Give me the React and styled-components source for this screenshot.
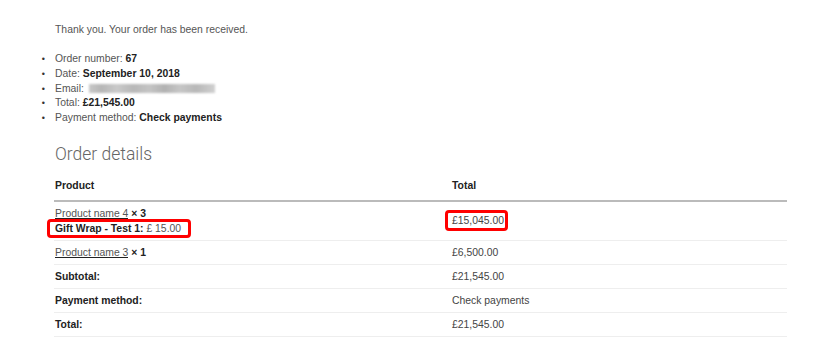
import React from "react";
import styled, { createGlobalStyle } from "styled-components";

const Global = createGlobalStyle`
  html, body { margin: 0; padding: 0; background: #fff; }
  body { font-family: "Liberation Sans", Arial, sans-serif; font-size: 10.4px; color: #555; }
`;

const Page = styled.div`
  padding: 22px 0 0 55px;
`;

const Notice = styled.p`
  margin: 0 0 15px;
  line-height: 15px;
  color: #555;
`;

const Details = styled.ul`
  margin: 0;
  padding: 0;
  list-style: disc outside;
  li {
    line-height: 14.75px;
    color: #555;
  }
  li::marker {
    content: "\\2022\\00a0\\00a0\\00a0\\00a0";
    color: #333;
    font-size: 9px;
  }
`;

const Strong = styled.strong`
  color: #222;
  font-weight: 700;
`;

const Blurred = styled.span`
  display: inline-block;
  vertical-align: -1px;
  width: 126px;
  height: 9px;
  margin-left: 2px;
  background: linear-gradient(90deg, #c8c8c8 0%, #b6b6b6 10%, #cacaca 22%, #b8b8b8 35%, #c4c4c4 48%, #b2b2b2 60%, #c6c6c6 72%, #b8b8b8 85%, #d0d0d0 100%);
  filter: blur(1.2px);
`;

const Heading = styled.h2`
  margin: 18px 0 8px;
  font-family: Roboto, "Liberation Sans", sans-serif;
  font-weight: 300;
  font-size: 17.5px;
  line-height: 20px;
  color: #666;
`;

const Table = styled.table`
  margin-left: -1px;
  width: 733px;
  border-collapse: collapse;
  table-layout: fixed;
`;

const Th = styled.th`
  text-align: left;
  font-weight: 700;
  color: #222;
  padding: ${(p) => (p.$head ? "7px 0 7px 1px" : "4px 0 4px 1px")};
  line-height: ${(p) => (p.$head ? "14px" : "15px")};
  vertical-align: middle;
`;

const Td = styled.td`
  padding: 4px 0 4px 1px;
  line-height: 15px;
  color: #444;
  vertical-align: middle;
`;

const HeadRow = styled.tr`
  border-bottom: 2px solid #bbb;
`;

const Row = styled.tr`
  border-bottom: 1px solid #eee;
`;

const Link = styled.a`
  color: #555;
  text-decoration: none;
  box-shadow: inset 0 -1px 0 #222;
`;

const Meta = styled.div`
  color: #555;
`;

const Mark = styled.span`
  outline: 3px solid #f00;
  border-radius: 1px;
  padding: ${(p) => p.$pad};
  margin: ${(p) => p.$margin};
`;

const Qty = styled.strong`
  color: #222;
`;

export default function App() {
  return (
    <>
      <Global />
      <Page>
        <Notice>Thank you. Your order has been received.</Notice>
        <Details>
          <li>Order number: <Strong>67</Strong></li>
          <li>Date: <Strong>September 10, 2018</Strong></li>
          <li>Email: <Blurred /></li>
          <li>Total: <Strong>£21,545.00</Strong></li>
          <li>Payment method: <Strong>Check payments</Strong></li>
        </Details>
        <Heading>Order details</Heading>
        <Table>
          <colgroup>
            <col style={{ width: "397px" }} />
            <col />
          </colgroup>
          <thead>
            <HeadRow>
              <Th $head>Product</Th>
              <Th $head>Total</Th>
            </HeadRow>
          </thead>
          <tbody>
            <Row>
              <Td>
                <Link href="#">Product name 4</Link> <Qty>× 3</Qty>
                <Meta>
                  <Mark $pad="1px 7px 1px 5px" $margin="0 -7px 0 -5px">
                    <Strong>Gift Wrap - Test 1:</Strong> £ 15.00
                  </Mark>
                </Meta>
              </Td>
              <Td>
                <Mark $pad="2px 1px 2px 4px" $margin="0 -1px 0 -4px">£15,045.00</Mark>
              </Td>
            </Row>
            <Row>
              <Td>
                <Link href="#">Product name 3</Link> <Qty>× 1</Qty>
              </Td>
              <Td>£6,500.00</Td>
            </Row>
            <Row>
              <Th>Subtotal:</Th>
              <Td>£21,545.00</Td>
            </Row>
            <Row>
              <Th>Payment method:</Th>
              <Td>Check payments</Td>
            </Row>
            <Row>
              <Th>Total:</Th>
              <Td>£21,545.00</Td>
            </Row>
          </tbody>
        </Table>
      </Page>
    </>
  );
}
